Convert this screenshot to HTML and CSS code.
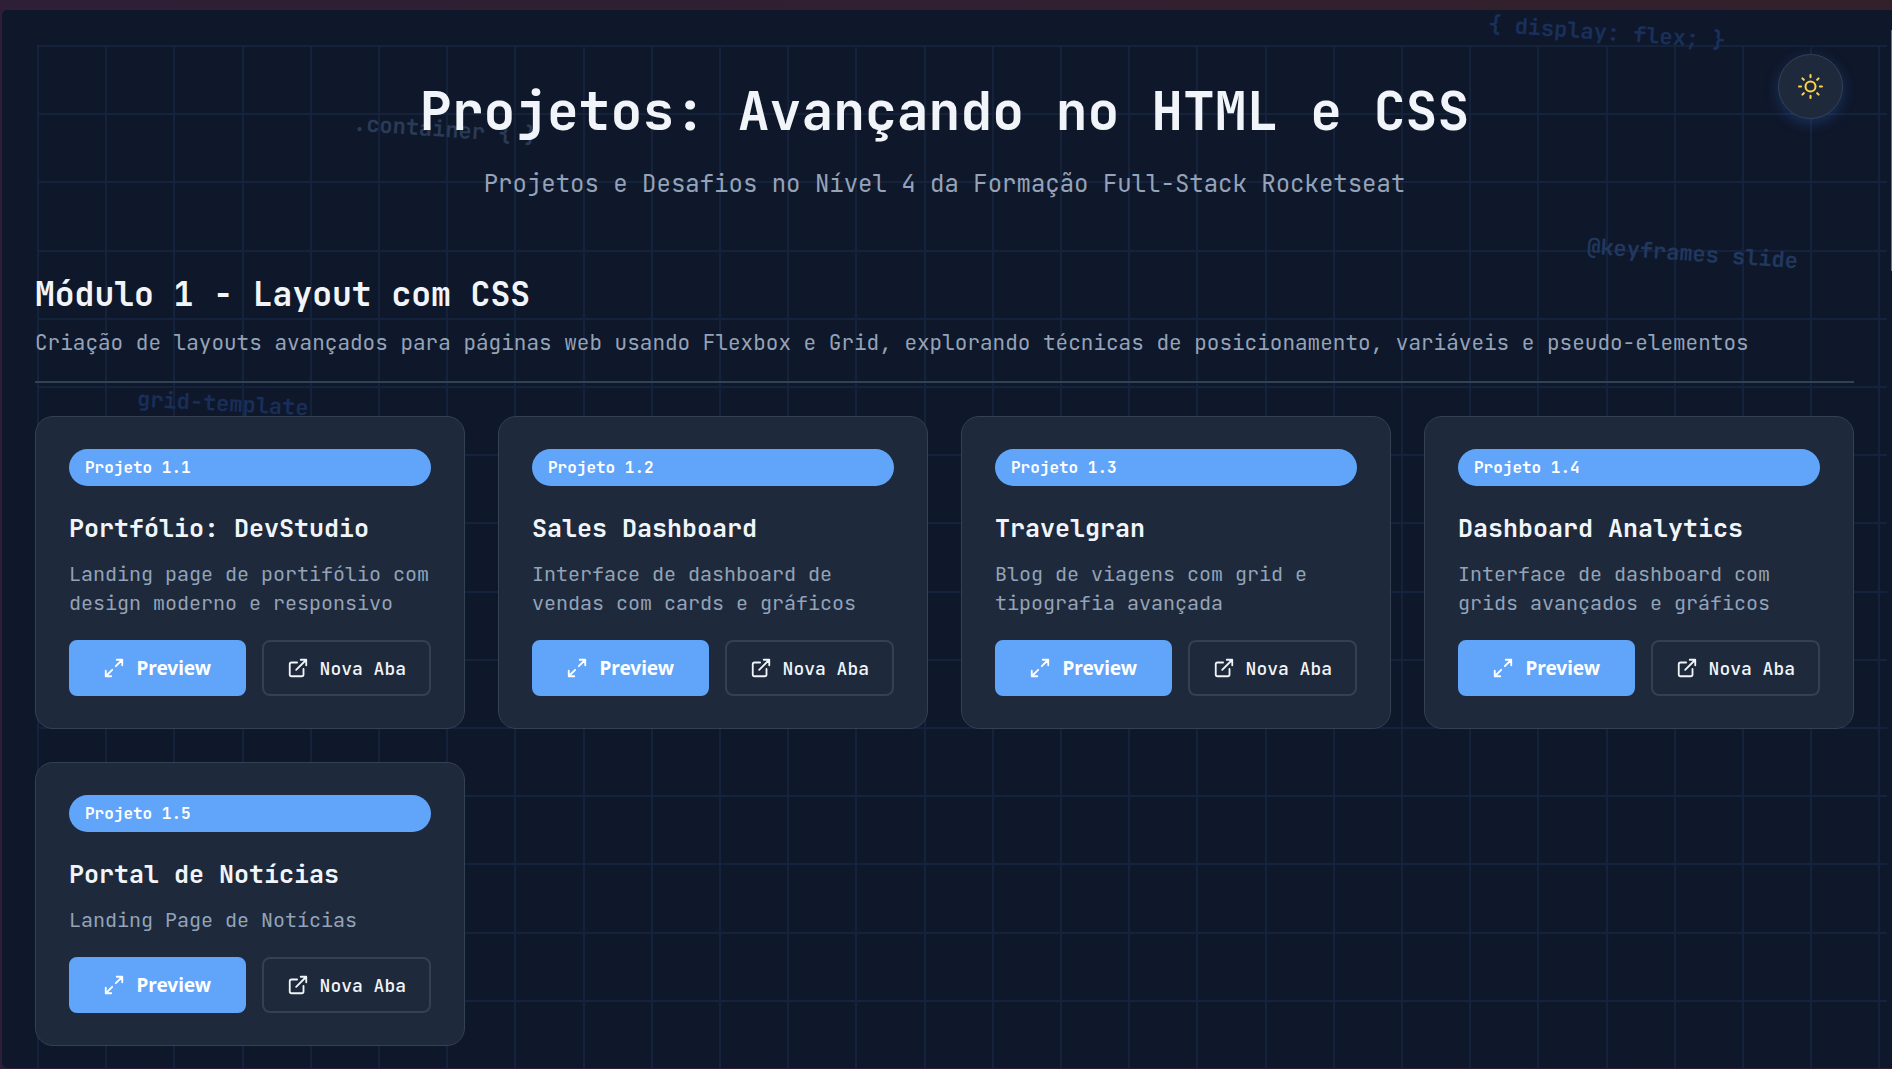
FILE: index.html
```html
<!DOCTYPE html>
<html lang="pt-BR">
<head>
<meta charset="utf-8">
<title>Projetos: Avançando no HTML e CSS</title>
<link rel="stylesheet" href="styles.css">
</head>
<body>
<svg class="sprite" aria-hidden="true">
  <symbol id="icon-expand" viewBox="0 0 24 24"><path d="M15 3h6v6M21 3l-7 7M9 21H3v-6M3 21l7-7"/></symbol>
  <symbol id="icon-external" viewBox="0 0 24 24"><path d="M18 13v6a2 2 0 0 1-2 2H5a2 2 0 0 1-2-2V8a2 2 0 0 1 2-2h6M15 3h6v6M10 14 21 3"/></symbol>
</svg>
<div class="pane">
  <div class="backdrop" aria-hidden="true">
    <div class="grid-lines"></div>
    <span class="snippet snippet-display">{ display: flex; }</span>
    <span class="snippet snippet-container">.container { }</span>
    <span class="snippet snippet-keyframes">@keyframes slide</span>
    <span class="snippet snippet-template">grid-template</span>
    <span class="scroll-thumb"></span>
  </div>

  <button class="theme-toggle" type="button" aria-label="Alternar tema">
    <svg viewBox="0 0 24 24" aria-hidden="true"><circle cx="12" cy="12" r="4.8"/><path d="M12 1v2M12 21v2M1 12h2M21 12h2M4.2 4.2l1.4 1.4M18.4 18.4l1.4 1.4M4.2 19.8l1.4-1.4M18.4 5.6l1.4-1.4"/></svg>
  </button>

  <main class="content">
    <header class="page-header">
      <h1>Projetos: Avançando no HTML e CSS</h1>
      <p>Projetos e Desafios no Nível 4 da Formação Full-Stack Rocketseat</p>
    </header>

    <section>
      <div class="module-header">
        <h2>Módulo 1 - Layout com CSS</h2>
        <p>Criação de layouts avançados para páginas web usando Flexbox e Grid, explorando técnicas de posicionamento, variáveis e pseudo-elementos</p>
      </div>
      <div class="cards">
        <article class="card">
          <span class="badge">Projeto 1.1</span>
          <h3>Portfólio: DevStudio</h3>
          <p>Landing page de portifólio com design moderno e responsivo</p>
          <div class="actions">
            <button class="btn btn-primary" type="button"><svg aria-hidden="true"><use href="#icon-expand"/></svg>Preview</button>
            <a class="btn btn-outline" href="#"><svg aria-hidden="true"><use href="#icon-external"/></svg>Nova Aba</a>
          </div>
        </article>
        <article class="card">
          <span class="badge">Projeto 1.2</span>
          <h3>Sales Dashboard</h3>
          <p>Interface de dashboard de vendas com cards e gráficos</p>
          <div class="actions">
            <button class="btn btn-primary" type="button"><svg aria-hidden="true"><use href="#icon-expand"/></svg>Preview</button>
            <a class="btn btn-outline" href="#"><svg aria-hidden="true"><use href="#icon-external"/></svg>Nova Aba</a>
          </div>
        </article>
        <article class="card">
          <span class="badge">Projeto 1.3</span>
          <h3>Travelgran</h3>
          <p>Blog de viagens com grid e tipografia avançada</p>
          <div class="actions">
            <button class="btn btn-primary" type="button"><svg aria-hidden="true"><use href="#icon-expand"/></svg>Preview</button>
            <a class="btn btn-outline" href="#"><svg aria-hidden="true"><use href="#icon-external"/></svg>Nova Aba</a>
          </div>
        </article>
        <article class="card">
          <span class="badge">Projeto 1.4</span>
          <h3>Dashboard Analytics</h3>
          <p>Interface de dashboard com grids avançados e gráficos</p>
          <div class="actions">
            <button class="btn btn-primary" type="button"><svg aria-hidden="true"><use href="#icon-expand"/></svg>Preview</button>
            <a class="btn btn-outline" href="#"><svg aria-hidden="true"><use href="#icon-external"/></svg>Nova Aba</a>
          </div>
        </article>
        <article class="card">
          <span class="badge">Projeto 1.5</span>
          <h3>Portal de Notícias</h3>
          <p>Landing Page de Notícias</p>
          <div class="actions">
            <button class="btn btn-primary" type="button"><svg aria-hidden="true"><use href="#icon-expand"/></svg>Preview</button>
            <a class="btn btn-outline" href="#"><svg aria-hidden="true"><use href="#icon-external"/></svg>Nova Aba</a>
          </div>
        </article>
      </div>
    </section>
  </main>
</div>
</body>
</html>
```
FILE: styles.css
```css
:root {
  --bg: #0f172a;
  --surface: #1e293b;
  --border: #334155;
  --text: #f1f5f9;
  --muted: #94a3b8;
  --accent: #60a5fa;
  --line: #14223b;
}

* {
  box-sizing: border-box;
  margin: 0;
}

body {
  display: flex;
  min-height: 100vh;
  padding: 10px 0 1px 2px;
  background: linear-gradient(to right, #2e1f37, #33202a);
  color: var(--text);
  font-family: "JetBrains Mono", "DejaVu Sans Mono", monospace;
}

.sprite {
  position: absolute;
  width: 0;
  height: 0;
}

.pane {
  position: relative;
  flex: 1;
  border-radius: 5px 0 0 5px;
  background: var(--bg);
}

/* Decorative background */
.backdrop {
  position: absolute;
  inset: 0;
}

/* Five cells per 341px tile */
.grid-lines {
  position: absolute;
  inset: 35px 5px 0 35px;
  background:
    linear-gradient(to right, var(--line) 0 2px, transparent 2px 68px, var(--line) 68px 70px, transparent 70px 136px, var(--line) 136px 138px, transparent 138px 205px, var(--line) 205px 207px, transparent 207px 273px, var(--line) 273px 275px, transparent 275px) 0 0 / 341px 341px,
    linear-gradient(to bottom, var(--line) 0 2px, transparent 2px 68px, var(--line) 68px 70px, transparent 70px 136px, var(--line) 136px 138px, transparent 138px 205px, var(--line) 205px 207px, transparent 207px 273px, var(--line) 273px 275px, transparent 275px) 0 0 / 341px 341px;
}

.snippet {
  position: absolute;
  font-size: 22px;
  line-height: 28px;
  font-weight: 600;
  white-space: pre;
  transform: rotate(4deg);
}

.snippet-display {
  top: 9px;
  right: 166px;
  color: #1a305c;
}

.snippet-container {
  top: 106px;
  left: 351px;
  color: #2a3b57;
}

.snippet-keyframes {
  top: 230px;
  right: 94px;
  color: #21385f;
}

.snippet-template {
  top: 380px;
  left: 135px;
  color: #192e59;
  transform: rotate(3deg);
}

.scroll-thumb {
  position: absolute;
  top: 20px;
  right: 0;
  width: 1px;
  height: 241px;
  background: #6b6f78;
}

.theme-toggle {
  position: absolute;
  top: 44px;
  right: 49px;
  z-index: 2;
  display: grid;
  place-items: center;
  width: 65px;
  height: 65px;
  padding: 0;
  border: 1px solid var(--border);
  border-radius: 50%;
  background: var(--surface);
  box-shadow: 0 4px 14px rgba(59, 130, 246, 0.25);
  color: #fcd34d;
}

.theme-toggle svg {
  width: 25px;
  height: 25px;
}

svg {
  fill: none;
  stroke: currentColor;
  stroke-width: 2;
  stroke-linecap: round;
  stroke-linejoin: round;
}

.content {
  position: relative;
  padding: 69px 38px 22px 33px;
}

.page-header {
  margin-bottom: 74px;
  text-align: center;
}

h1 {
  margin-bottom: 25px;
  font-size: 53px;
  line-height: 64px;
  font-weight: 700;
}

.page-header p {
  color: var(--muted);
  font-size: 24px;
  line-height: 32px;
}

.module-header {
  margin-bottom: 33px;
  padding-bottom: 23px;
  border-bottom: 2px solid var(--border);
}

h2 {
  margin-bottom: 14px;
  font-size: 33px;
  line-height: 40px;
  font-weight: 600;
}

.module-header p {
  color: var(--muted);
  font-size: 21px;
  line-height: 30px;
}

.cards {
  display: grid;
  grid-template-columns: repeat(auto-fill, minmax(400px, 1fr));
  align-items: start;
  gap: 33px;
}

.card {
  padding: 32px 33px;
  border: 1px solid var(--border);
  border-radius: 18px;
  background: var(--surface);
}

.badge {
  display: block;
  margin-bottom: 26px;
  padding: 0 16px;
  border-radius: 20px;
  background: var(--accent);
  color: #fff;
  font-size: 16px;
  line-height: 37px;
  font-weight: 600;
}

h3 {
  margin-bottom: 16px;
  font-size: 25px;
  line-height: 32px;
  font-weight: 600;
}

.card p {
  margin-bottom: 22px;
  color: var(--muted);
  font-size: 20px;
  line-height: 29px;
}

.actions {
  display: flex;
  gap: 16px;
}

.btn {
  display: flex;
  align-items: center;
  justify-content: center;
  gap: 11px;
  height: 56px;
  padding: 0 23px;
  border: 2px solid var(--border);
  border-radius: 8px;
  font-family: inherit;
  font-size: 18px;
  font-weight: 500;
  text-decoration: none;
}

.btn svg {
  width: 22px;
  height: 22px;
}

.btn-primary {
  flex: 1;
  border-color: var(--accent);
  background: var(--accent);
  color: #fff;
  font-family: "Noto Sans", sans-serif;
  font-size: 19px;
  font-weight: 700;
}

.btn-outline {
  color: var(--text);
}
```
